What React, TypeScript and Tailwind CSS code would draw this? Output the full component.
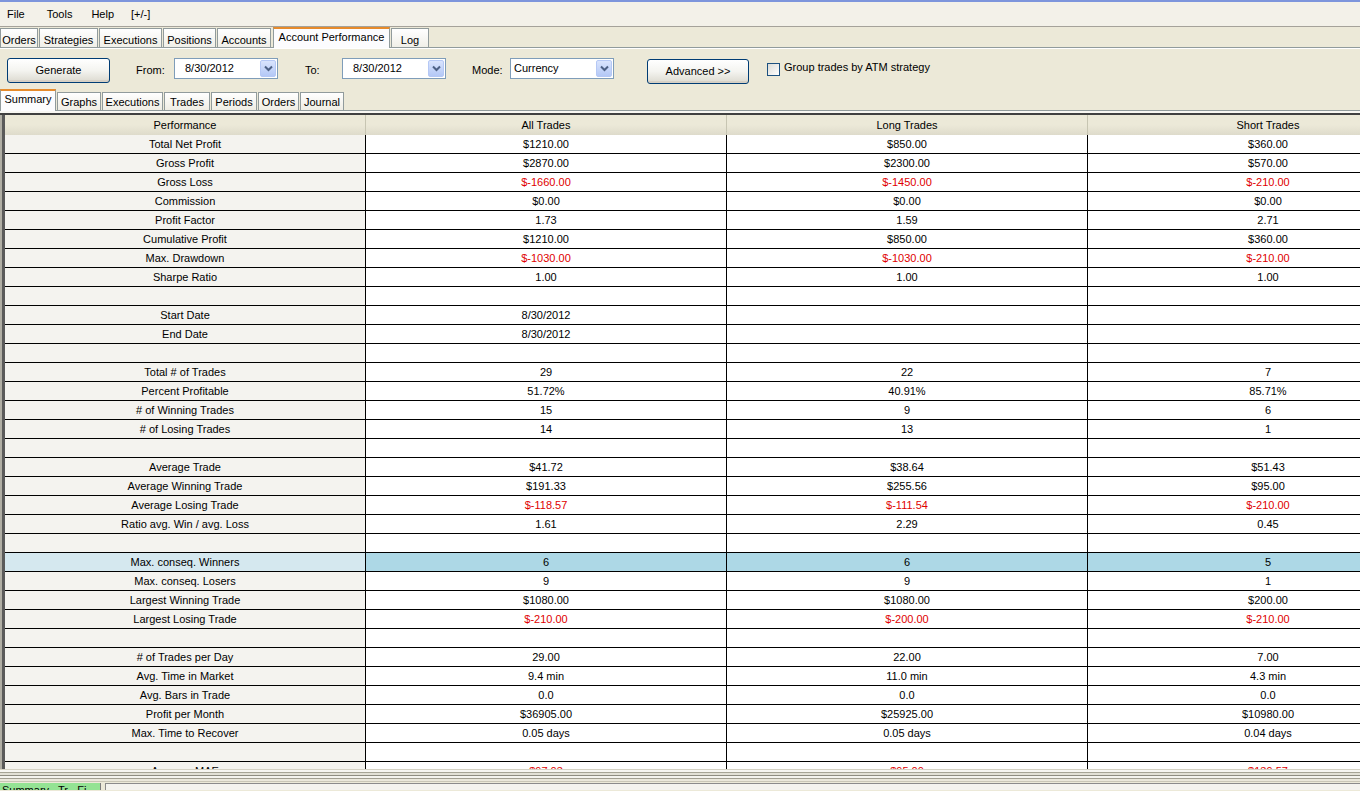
import React from "react";

type Row = [string, string, string, string, boolean?];

const rows: Row[] = [
  ["Total Net Profit", "$1210.00", "$850.00", "$360.00"],
  ["Gross Profit", "$2870.00", "$2300.00", "$570.00"],
  ["Gross Loss", "$-1660.00", "$-1450.00", "$-210.00", true],
  ["Commission", "$0.00", "$0.00", "$0.00"],
  ["Profit Factor", "1.73", "1.59", "2.71"],
  ["Cumulative Profit", "$1210.00", "$850.00", "$360.00"],
  ["Max. Drawdown", "$-1030.00", "$-1030.00", "$-210.00", true],
  ["Sharpe Ratio", "1.00", "1.00", "1.00"],
  ["", "", "", ""],
  ["Start Date", "8/30/2012", "", ""],
  ["End Date", "8/30/2012", "", ""],
  ["", "", "", ""],
  ["Total # of Trades", "29", "22", "7"],
  ["Percent Profitable", "51.72%", "40.91%", "85.71%"],
  ["# of Winning Trades", "15", "9", "6"],
  ["# of Losing Trades", "14", "13", "1"],
  ["", "", "", ""],
  ["Average Trade", "$41.72", "$38.64", "$51.43"],
  ["Average Winning Trade", "$191.33", "$255.56", "$95.00"],
  ["Average Losing Trade", "$-118.57", "$-111.54", "$-210.00", true],
  ["Ratio avg. Win / avg. Loss", "1.61", "2.29", "0.45"],
  ["", "", "", ""],
  ["Max. conseq. Winners", "6", "6", "5"],
  ["Max. conseq. Losers", "9", "9", "1"],
  ["Largest Winning Trade", "$1080.00", "$1080.00", "$200.00"],
  ["Largest Losing Trade", "$-210.00", "$-200.00", "$-210.00", true],
  ["", "", "", ""],
  ["# of Trades per Day", "29.00", "22.00", "7.00"],
  ["Avg. Time in Market", "9.4 min", "11.0 min", "4.3 min"],
  ["Avg. Bars in Trade", "0.0", "0.0", "0.0"],
  ["Profit per Month", "$36905.00", "$25925.00", "$10980.00"],
  ["Max. Time to Recover", "0.05 days", "0.05 days", "0.04 days"],
  ["", "", "", ""],
  ["Average MAE", "$97.03", "$95.00", "$139.57", true],
];

const topTabs = [
  { label: "Orders", w: "w-[38px]" },
  { label: "Strategies", w: "w-[59px]" },
  { label: "Executions", w: "w-[63px]" },
  { label: "Positions", w: "w-[53px]" },
  { label: "Accounts", w: "w-[54px]" },
  { label: "Account Performance", w: "w-[117px]", active: true },
  { label: "Log", w: "w-[38px]" },
];

const subTabs = [
  { label: "Summary", w: "w-[56px]", active: true },
  { label: "Graphs", w: "w-[44px]" },
  { label: "Executions", w: "w-[61px]" },
  { label: "Trades", w: "w-[46px]" },
  { label: "Periods", w: "w-[46px]" },
  { label: "Orders", w: "w-[41px]" },
  { label: "Journal", w: "w-[44px]" },
];

function Combo({ value, pad = "pl-[10px]" }: { value: string; pad?: string }) {
  return (
    <div className="flex h-[21px] w-[104px] items-center border border-[#7f9db9] bg-white">
      <span className={`flex-1 ${pad} text-left`}>{value}</span>
      <div className="mr-[1px] flex h-[17px] w-[16px] items-center justify-center rounded-[2px] border border-[#b5c8f5] bg-gradient-to-b from-[#d9e4fd] to-[#b4c8f6]">
        <svg width="9" height="7" viewBox="0 0 9 7">
          <path d="M1 1.5 L4.5 5 L8 1.5" fill="none" stroke="#4d6185" strokeWidth="2" />
        </svg>
      </div>
    </div>
  );
}

function XpButton({ label, w }: { label: string; w: string }) {
  return (
    <div
      className={`flex h-[25px] ${w} items-center justify-center rounded-[3px] border border-[#003c74] bg-gradient-to-b from-[#ffffff] via-[#f4f4f0] to-[#dcdad0] shadow-[inset_0_-2px_0_#d6d0c5]`}
    >
      {label}
    </div>
  );
}

export default function App() {
  return (
    <div className="h-[791px] w-[1360px] overflow-hidden bg-[#ece9d8] text-[11px] leading-none text-black [font-family:'Liberation_Sans',Arial,sans-serif]">
      {/* title strip */}
      <div className="h-[2px] bg-[#7d95dc]" />

      {/* menu bar */}
      <div className="flex h-[25px] items-center border-b border-[#a5a29a] bg-[#f3f1e9] text-[11px]">
        <span className="ml-[7px]">File</span>
        <span className="ml-[22px]">Tools</span>
        <span className="ml-[19px]">Help</span>
        <span className="ml-[17px]">[+/-]</span>
      </div>

      {/* main tabs */}
      <div className="flex h-[21px] items-end border-b border-[#919b9c] bg-[#ece9d8]">
        {topTabs.map((t) =>
          t.active ? (
            <div
              key={t.label}
              className={`${t.w} -mb-[1px] ml-[2px] flex h-[21px] items-start justify-center border-x border-[#919b9c] border-t-[2px] border-t-[#e68b2c] bg-[#fcfcfe] pt-[3px]`}
            >
              {t.label}
            </div>
          ) : (
            <div
              key={t.label}
              className={`${t.w} ml-[1px] flex h-[19px] items-center justify-center border-x border-t border-[#919b9c] bg-gradient-to-b from-[#ffffff] to-[#f0efe8] pt-[4px] first:ml-0`}
            >
              {t.label}
            </div>
          )
        )}
      </div>

      {/* toolbar */}
      <div className="flex h-[40px] items-start border-t border-white pt-[9px]">
        <div className="ml-[7px]">
          <XpButton label="Generate" w="w-[103px]" />
        </div>
        <span className="ml-[26px] mt-[7px] w-[38px]">From:</span>
        <Combo value="8/30/2012" />
        <span className="ml-[27px] mt-[7px] w-[37px]">To:</span>
        <Combo value="8/30/2012" />
        <span className="ml-[26px] mt-[7px] w-[38px]">Mode:</span>
        <Combo value="Currency" pad="pl-[3px]" />
        <div className="ml-[33px] mt-[1px]">
          <XpButton label="Advanced >>" w="w-[102px]" />
        </div>
        <div className="ml-[18px] mt-[5px] h-[13px] w-[13px] border border-[#1c5180] bg-gradient-to-br from-[#dcdcd7] to-[#ffffff]" />
        <span className="ml-[4px] mt-[4px]">Group trades by ATM strategy</span>
      </div>

      {/* sub tabs */}
      <div className="flex h-[22px] items-end bg-[#ece9d8]">
        {subTabs.map((t) =>
          t.active ? (
            <div
              key={t.label}
              className={`${t.w} -mb-[1px] flex h-[22px] items-start justify-center border-x border-[#919b9c] border-t-[2px] border-t-[#e68b2c] bg-[#fcfcfe] pt-[3px]`}
            >
              {t.label}
            </div>
          ) : (
            <div
              key={t.label}
              className={`${t.w} ml-[1px] flex h-[18px] items-center justify-center border-x border-t border-[#919b9c] bg-gradient-to-b from-[#ffffff] to-[#efede4] pt-[1px]`}
            >
              {t.label}
            </div>
          )
        )}
      </div>

      {/* separator */}
      <div className="h-[1px] bg-[#919b9c]" />
      <div className="h-[2px] bg-[#f8f7f2]" />
      <div className="h-[2px] bg-[#404040]" />

      {/* table */}
      <div className="flex h-[654px] overflow-hidden">
        <div className="w-[5px] shrink-0 border-l-[2px] border-l-[#b0aea4] border-r-[3px] border-r-[#5a5a5a] bg-[#8a8a8a]" />
        <div className="flex flex-col">
          {/* header */}
          <div className="flex h-[20px] shrink-0 bg-gradient-to-b from-[#ece9d8] via-[#ece9d8] to-[#dedbcb]">
            {["Performance", "All Trades", "Long Trades", "Short Trades"].map((h) => (
              <div
                key={h}
                className="flex h-[20px] w-[361px] shrink-0 items-center justify-center border-r border-r-[#c7c5b2] pt-[1px]"
              >
                {h}
              </div>
            ))}
          </div>
          {rows.map(([label, a, b, c, red], i) => {
            const hi = label === "Max. conseq. Winners";
            const val = `flex h-[19px] w-[361px] shrink-0 items-center justify-center border-b border-r border-black pt-[1px] ${
              hi ? "bg-[#add8e6]" : "bg-white"
            } ${red ? "text-[#e00000]" : ""}`;
            return (
              <div key={i} className="flex h-[19px] shrink-0">
                <div
                  className={`flex h-[19px] w-[361px] shrink-0 items-center justify-center border-b border-r border-black pt-[1px] ${
                    hi ? "bg-[#d5e8ef]" : "bg-[#f4f3ef]"
                  }`}
                >
                  {label}
                </div>
                <div className={val}>{a}</div>
                <div className={val}>{b}</div>
                <div className={val}>{c}</div>
              </div>
            );
          })}
        </div>
      </div>

      {/* splitter */}
      <div className="h-[1px] bg-[#d5d2c4]" />
      <div className="h-[2px] bg-[#f7f6f1]" />
      <div className="h-[1px] bg-[#a7a596]" />
      <div className="h-[2px] bg-[#e3e1d6]" />
      <div className="h-[1px] bg-[#8f8d81]" />
      <div className="h-[2px] bg-[#f5f4ee]" />
      <div className="h-[1px] bg-[#a29f91]" />
      <div className="h-[2px] bg-[#ebe8db]" />
      <div className="h-[1px] bg-[#c9c6b6]" />

      {/* bottom tabs */}
      <div className="flex h-[8px] items-start overflow-hidden pt-[1px]">
        <div className="h-[10px] w-[101px] overflow-hidden border-r border-[#7d7d7d] bg-[#94e394] pl-[2px] pt-[2px] text-[11px]">
          Summary &nbsp; Tr &nbsp; Fi
        </div>
        <div className="ml-[4px] h-[10px] flex-1 border-l border-t border-[#8b8b8b] bg-[#f4f3ee]" />
      </div>
    </div>
  );
}
